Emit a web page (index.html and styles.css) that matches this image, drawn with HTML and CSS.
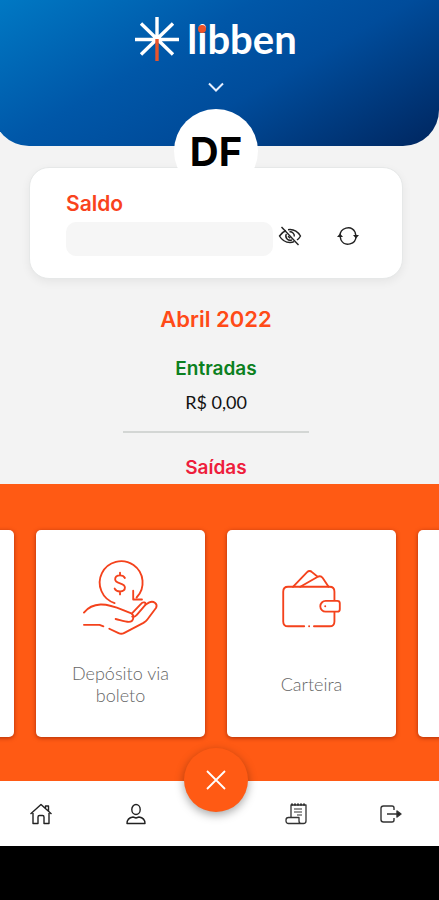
FILE: index.html
```
<!DOCTYPE html>
<html lang="pt-BR">

<head>
    <meta charset="UTF-8">
    <meta name="viewport" content="width=device-width, initial-scale=1.0">
    <title>Libben</title>
    <link rel="stylesheet" href="styles.css">
</head>

<body>
    <div class="app">
        <div class="content">
            <header class="header">
                <div class="brand">
                    <svg class="brand-mark" viewBox="0 0 44 44" fill="none" stroke="#fff" stroke-width="3.4" aria-hidden="true">
                        <path d="M22 0v22M0 22.500h44M6 6.500l32 31M38 6.500L6 37.500" />
                        <path d="M22 22v22" stroke="#e8542c" />
                    </svg>
                    <span class="brand-name">l<span class="brand-i">i</span>bben</span>
                </div>
                <button class="icon-btn expand" aria-label="Expandir">
                    <svg width="16" height="10" viewBox="0 0 16 10" fill="none" stroke="#e6efff" stroke-width="2">
                        <path d="M1 1.500l7 7 7-7" />
                    </svg>
                </button>
            </header>

            <div class="avatar">DF</div>

            <section class="balance">
                <label for="saldo">Saldo</label>
                <div class="balance-row">
                    <input type="text" id="saldo" readonly>
                    <button class="icon-btn" aria-label="Mostrar saldo">
                        <svg width="24" height="20" viewBox="0 0 24 20" fill="none" stroke="#222" stroke-width="1.4">
                            <path d="M8 4.500C4.500 6 2.500 8.500 1.500 10c2 3.500 6 6.500 10.500 6.500 1.500 0 3-.3 4.200-.8M10 3.700c5.500-.8 10 2.300 12.500 6.300-.8 1.500-2 2.900-3.500 4" />
                            <path d="M8.300 8A4.300 4.300 0 0 0 14 13.800M11.500 5.800a4.300 4.300 0 0 1 4.800 4.700M10 10.200l2.300 2" />
                            <path d="M3.500 1l17 18" />
                        </svg>
                    </button>
                    <button class="icon-btn" aria-label="Atualizar">
                        <svg width="24" height="20" viewBox="0 0 24 20" fill="none" stroke="#222" stroke-width="1.4">
                            <path d="M4 10a8 8 0 0 1 15-4M20 10a8 8 0 0 1-15 4" />
                            <path d="M1 11l3-3.500L7 11zM17 9l3 3.500L23 9z" fill="#222" stroke="none" />
                            <path d="M19 6l1 4M5 14l-1-4" />
                        </svg>
                    </button>
                </div>
            </section>

            <section class="summary">
                <h1>Abril 2022</h1>
                <h2 class="income">Entradas</h2>
                <p>R$ 0,00</p>
                <hr>
                <h2 class="expense">Saídas</h2>
            </section>
        </div>

        <div class="actions">
            <button class="card" aria-label="Anterior"></button>
            <button class="card">
                <svg class="card-icon" viewBox="0 0 82 82" fill="none" stroke="#f4421c" stroke-width="1.9" stroke-linecap="round" stroke-linejoin="round" aria-hidden="true">
                    <path d="M34.500 46.200A22 22 0 1 1 57 40.500" />
                    <path d="M53.500 33.500v9h9" />
                    <path d="M45 20.500c-1-2-2.600-2.700-5-2.700-3 0-5 1.500-5 4 0 5.500 10 3 10 8.500 0 2.700-2.200 4-5 4s-4.600-1-5.500-3M40 15v2.800M40 34.300v3" />
                    <path d="M3 56c4-5 10-8 17-8.300 12-.4 21 5.300 31 8.800 4 1.500 3.500 9-2 9-4.500 0-9-2-13.500-3" />
                    <path d="M52 57l9.500-10c2-2.500 6-1.500 4.500 1L57 58.500c-1 1.500-3 2-4.500 1.500" />
                    <path d="M66 48l4-2.500c4-2 9 1 7 5.500L68 63c-1 1.500-2.500 2.500-4 3.500L44 77c-2 1-3.500 1-5.500 0L29 72.500" />
                    <path d="M3 68.500h16l4 1.500" />
                </svg>
                <span class="card-label">Depósito via boleto</span>
            </button>
            <button class="card">
                <svg class="card-icon" viewBox="0 0 82 82" fill="none" stroke="#f4421c" stroke-width="1.9" stroke-linecap="round" stroke-linejoin="round" aria-hidden="true">
                    <path d="M33 70H16.500c-3 0-5-2-5-5V34.500c0-3 2-5 5-5H59c3 0 5 2 5 5V43M64 55.500V65c0 3-2 5-5 5H43M38 70h.1" />
                    <path d="M21.500 29.500l14.500-15c1.500-1.600 3.500-1.600 5 0l5.500 4.500M29 29.500l17.500-10c2-1.200 4-1 5.500 1l6 9" />
                    <path d="M67 44H55a5.500 5.500 0 0 0 0 11h12c1.500 0 2.500-1 2.500-2.500v-6c0-1.500-1-2.500-2.500-2.500zM54.500 49.500h.1" />
                </svg>
                <span class="card-label">Carteira</span>
            </button>
            <button class="card" aria-label="Próximo"></button>
        </div>

        <nav class="tabbar">
            <div class="tabs">
                <a href="#" aria-label="Início">
                    <svg width="24" height="24" viewBox="0 0 24 24" fill="none" stroke="#222" stroke-width="1.4" stroke-linejoin="round">
                        <path d="M1.500 12L12 2.500 22.500 12M16.500 6V4h3v5M4 11v10.500h5V15c0-1 .7-1.500 1.500-1.500h3c.8 0 1.500.5 1.500 1.500v6.500h5V11" />
                    </svg>
                </a>
                <a href="#" aria-label="Perfil">
                    <svg width="24" height="24" viewBox="0 0 24 24" fill="none" stroke="#222" stroke-width="1.4" stroke-linejoin="round">
                        <ellipse cx="12" cy="7.500" rx="4.200" ry="5" />
                        <path d="M3 21.500c0-4 3-6 6-6.500l3 1 3-1c3 .5 6 2.500 6 6.500z" />
                    </svg>
                </a>
            </div>
            <button class="fab" aria-label="Fechar">
                <svg width="20" height="20" viewBox="0 0 20 20" fill="none" stroke="#fff" stroke-width="1.8">
                    <path d="M1 1l18 18M19 1L1 19" />
                </svg>
            </button>
            <div class="tabs">
                <a href="#" aria-label="Extrato">
                    <svg width="24" height="24" viewBox="0 0 24 24" fill="none" stroke="#333" stroke-width="1.3" stroke-linejoin="round">
                        <path d="M7 15V3h15v16c0 1.500-1 2.500-2.500 2.500h-15C3 21.500 2 20.500 2 19v-1c0-1.500 1-2.500 2.500-2.500H15V19c0 1.500 1 2.500 2.500 2.500" />
                        <path d="M7 2.500h15" stroke-width="2" stroke-dasharray="2 1" />
                        <path d="M10 7h8M10 10h8M13 13h5" stroke="#777" />
                    </svg>
                </a>
                <a href="#" aria-label="Sair">
                    <svg width="24" height="24" viewBox="0 0 24 24" fill="none" stroke="#333" stroke-width="1.4" stroke-linejoin="round">
                        <path d="M15 8V6c0-1.300-.8-2-2-2H4.500C3 4 2 5 2 6.500v11C2 19 3 20 4.500 20H13c1.200 0 2-.7 2-2v-2M8 12h13" />
                        <path d="M18 9l4 3-4 3z" fill="#222" />
                    </svg>
                </a>
            </div>
        </nav>
    </div>
</body>

</html>
```
FILE: styles.css
```
* {
    box-sizing: border-box;
}

body {
    margin: 0;
    font-family: Lato, "Liberation Sans", sans-serif;
    background-color: #000;
    color: #111;
    overflow: hidden;
}

button {
    padding: 0;
    border: none;
    font-family: inherit;
    cursor: pointer;
}

svg {
    display: block;
}

/* the shell runs slightly past the left edge of the screen */
.app {
    display: flex;
    flex-direction: column;
    height: 100vh;
    margin-left: -7px;
    padding-bottom: 54px;
}

.content {
    flex: 1;
    min-height: 0;
    overflow: hidden;
    background-color: #f3f3f3;
}

.header {
    display: flex;
    flex-direction: column;
    align-items: center;
    gap: 20px;
    height: 146px;
    padding-top: 16px;
    border-radius: 0 0 36px 36px;
    background: linear-gradient(150deg, #0079c4 0%, #0057a8 38%, #004c9b 60%, #00265f 100%);
}

.brand {
    display: flex;
    align-items: center;
    gap: 8px;
    height: 46px;
}

.brand-mark {
    width: 44px;
    height: 44px;
}

.brand-name {
    color: #fff;
    font-size: 40px;
    font-weight: bold;
    line-height: 46px;
}

.brand-i {
    position: relative;
}

.brand-i::before {
    content: "";
    position: absolute;
    top: 10px;
    left: 1px;
    width: 8px;
    height: 8px;
    border-radius: 50%;
    background-color: #ee5328;
}

.icon-btn {
    background: none;
}

.avatar {
    position: relative;
    display: flex;
    align-items: center;
    justify-content: center;
    width: 84px;
    height: 84px;
    margin: -37px auto -26px;
    border-radius: 50%;
    background-color: #fff;
    color: #000;
    font-family: Inter, sans-serif;
    font-size: 40px;
    font-weight: bold;
    z-index: 1;
}

.balance {
    height: 112px;
    margin: 0 36px;
    padding: 24px 36px;
    border: 1px solid #e6e8e8;
    border-radius: 20px;
    background-color: #fff;
    box-shadow: 0 3px 10px rgba(0, 0, 0, 0.06);
}

.balance label {
    display: block;
    color: #f9431c;
    font-family: Inter, sans-serif;
    font-size: 21px;
    font-weight: 600;
    line-height: 24px;
}

.balance-row {
    display: flex;
    align-items: center;
    margin-top: 6px;
}

.balance input {
    flex: 1;
    min-width: 0;
    height: 34px;
    border: none;
    border-radius: 10px;
    background-color: #f6f6f6;
}

.balance-row .icon-btn {
    margin: -6px 0 0 5px;
}

.balance-row .icon-btn + .icon-btn {
    margin: -6px 6px 0 34px;
}

.summary {
    padding-top: 27px;
    text-align: center;
}

.summary h1,
.summary h2 {
    font-family: Inter, sans-serif;
    font-weight: 600;
    line-height: 26px;
}

.summary h1 {
    margin: 0 0 24px;
    color: #ff4a17;
    font-size: 22px;
}

.summary h2 {
    margin: 0;
    font-size: 19px;
}

.summary p {
    margin: 7px 0 16px;
    font-size: 18px;
    line-height: 26px;
}

.summary hr {
    width: 186px;
    height: 2px;
    margin: 0 auto 22px;
    border: none;
    background-color: #d3d6d4;
}

.summary .income {
    color: #0b8020;
}

.summary .expense {
    color: #ee1d3c;
}

.actions {
    display: flex;
    justify-content: center;
    gap: 22px;
    padding: 46px 0 44px;
    overflow: hidden;
    background-color: #ff5a14;
}

.card {
    display: flex;
    flex: none;
    flex-direction: column;
    align-items: center;
    width: 169px;
    height: 207px;
    padding: 28px 28px 0;
    border-radius: 5px;
    background-color: #fff;
    box-shadow: 0 1px 4px rgba(120, 20, 0, 0.6);
}

.card-icon {
    width: 80px;
    height: 80px;
}

.card-label {
    display: flex;
    align-items: center;
    height: 44px;
    margin-top: 24px;
    color: #666;
    font-size: 18px;
    font-weight: 300;
    line-height: 22px;
}

.tabbar {
    display: flex;
    height: 65px;
    background-color: #fff;
}

.tabs {
    display: flex;
    flex: 1;
    align-items: center;
    justify-content: space-around;
}

.fab {
    display: flex;
    align-items: center;
    justify-content: center;
    width: 64px;
    height: 64px;
    margin-top: -33px;
    border-radius: 50%;
    background-color: #ff5a14;
    box-shadow: 0 3px 10px rgba(0, 0, 0, 0.35);
    z-index: 1;
}
```
